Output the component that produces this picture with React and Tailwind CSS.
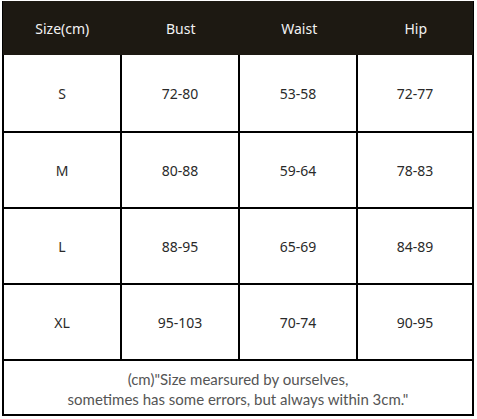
const headers = ["Size(cm)", "Bust", "Waist", "Hip"];

const rows = [
    ["S", "72-80", "53-58", "72-77"],
    ["M", "80-88", "59-64", "78-83"],
    ["L", "88-95", "65-69", "84-89"],
    ["XL", "95-103", "70-74", "90-95"],
];

const cellWidths = ["w-[118px] border-r-2", "w-[118px] border-r-2", "w-[118px] border-r-2", "w-[114px]"];

export default function App() {
    return (
        <div className="w-[477px] h-[419px] bg-white pt-[1px] pl-[2px]">
            <div
                className="w-[472px] border-x-2 border-b-2 border-black"
                style={{ fontFamily: '"Noto Sans", "DejaVu Sans", sans-serif' }}
            >
                <div className="flex h-[54px] bg-[#1d1912] -mx-[1px]">
                    {headers.map((h, i) => (
                        <div
                            key={h}
                            className={`${i === 3 ? "w-[115px]" : "w-[119px]"} flex items-center justify-center text-[14px] text-[#f2f2f2]`}
                        >
                            {h}
                        </div>
                    ))}
                </div>
                {rows.map((row, r) => (
                    <div
                        key={row[0]}
                        className={`flex border-black ${r === 0 ? "h-[76px]" : "h-[76px] border-t-2"}`}
                    >
                        {row.map((v, i) => (
                            <div
                                key={i}
                                className={`${cellWidths[i]} border-black flex items-center justify-center text-[14px] text-[#2a2a2a]`}
                            >
                                {v}
                            </div>
                        ))}
                    </div>
                ))}
                <div
                    className="h-[55px] border-t-2 border-black flex flex-col items-center justify-center text-[15px] leading-[20px] text-[#555] pt-[2px]"
                    style={{ fontFamily: 'Lato, "Noto Sans", sans-serif' }}
                >
                    <div>(cm)"Size mearsured by ourselves,</div>
                    <div>sometimes has some errors, but always within 3cm."</div>
                </div>
            </div>
        </div>
    );
}
